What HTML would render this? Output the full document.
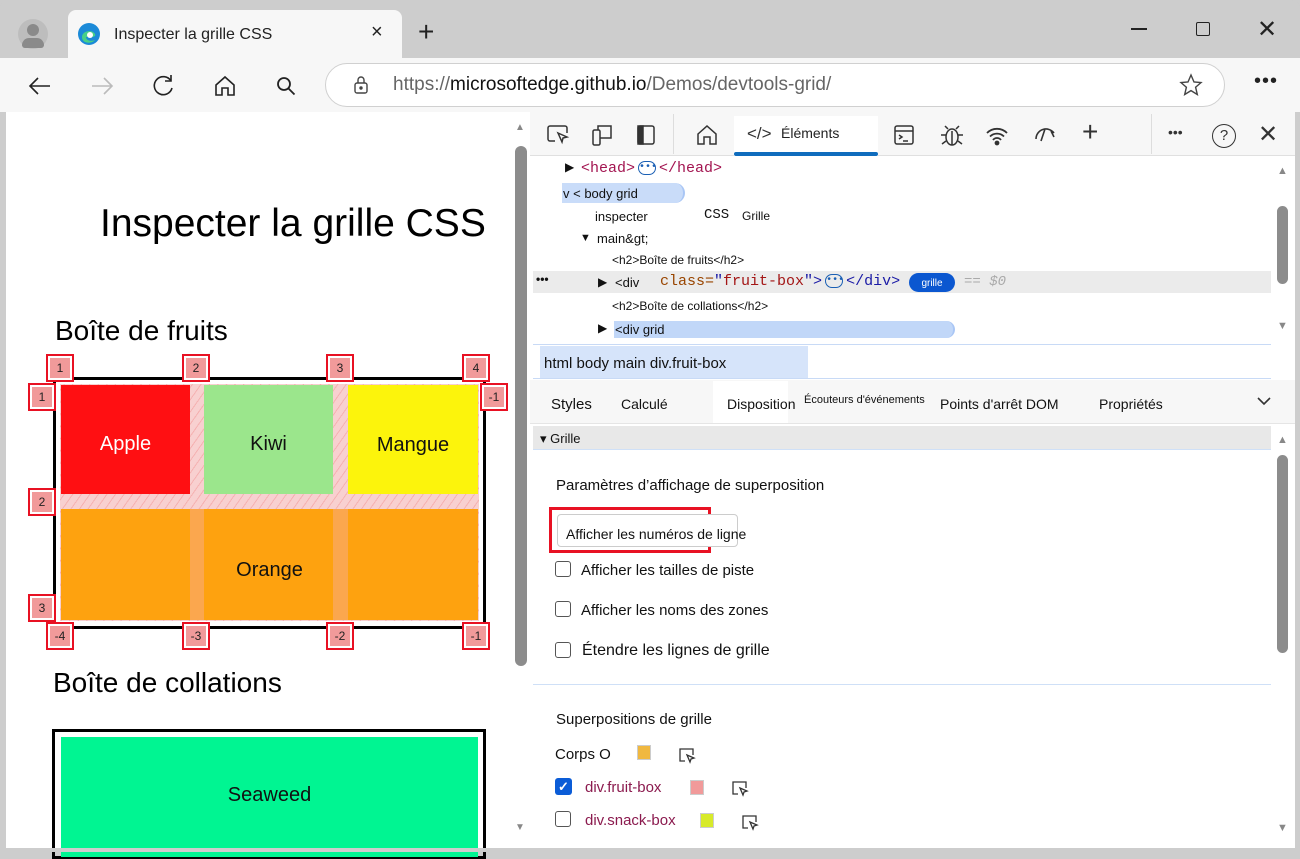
<!DOCTYPE html>
<html><head><meta charset="utf-8"><style>
*{margin:0;padding:0;box-sizing:border-box}
body{width:1300px;height:852px;overflow:hidden;background:#cdcdcd;font-family:"Liberation Sans",sans-serif;position:relative;color:#111}
.a{position:absolute}
.mono{font-family:"Liberation Mono",monospace}
.lb{position:absolute;width:28px;height:28px;border:2px solid #e81123;background:#fff;}
.lb span{position:absolute;left:2px;top:2px;width:20px;height:20px;background:#f19a9a;font-size:12px;text-align:center;line-height:20px;color:#222}
.cb{position:absolute;width:16px;height:16px;border:1.5px solid #555;border-radius:3px;background:#fff}
.t13{font-size:13px}
</style></head><body>
<!-- title bar -->
<div class="a" style="left:0;top:0;width:1300px;height:58px;background:#cdcdcd;border-radius:8px 8px 0 0"></div>
<div class="a" style="left:18px;top:19px;width:30px;height:30px;border-radius:50%;background:#bdbdbd"></div>
<div class="a" style="left:27px;top:24px;width:12px;height:12px;border-radius:50%;background:#8a8a8a"></div>
<div class="a" style="left:22px;top:38px;width:22px;height:10px;border-radius:10px 10px 4px 4px;background:#8a8a8a"></div>
<div class="a" style="left:68px;top:10px;width:334px;height:50px;background:#f7f7f7;border-radius:8px 8px 0 0"></div>
<svg class="a" style="left:77px;top:22px" width="24" height="24" viewBox="0 0 24 24"><circle cx="12" cy="12" r="11" fill="#1b8ad8"/><path d="M5 15c0-6 10-8 13-3 1 2-1 3-4 3H9c0 3 4 5 9 3-3 4-13 4-13-3z" fill="#48d088"/><circle cx="13" cy="13" r="3" fill="#fff"/></svg>
<div class="a" style="left:114px;top:26px;font-size:16px;color:#222">Inspecter la grille CSS</div>
<div class="a" style="left:371px;top:21px;font-size:20px;color:#222">×</div>
<div class="a" style="left:418px;top:16px;font-size:28px;font-weight:300;color:#222">+</div>
<div class="a" style="left:1131px;top:28px;width:16px;height:1.5px;background:#222"></div>
<div class="a" style="left:1196px;top:22px;width:14px;height:14px;border:1.5px solid #222;border-radius:2px"></div>
<div class="a" style="left:1257px;top:15px;font-size:24px;color:#222">✕</div>
<!-- toolbar -->
<div class="a" style="left:0;top:58px;width:1300px;height:54px;background:#f7f7f7"></div>
<svg class="a" style="left:26px;top:72px" width="28" height="28" viewBox="0 0 28 28" fill="none" stroke="#222" stroke-width="1.6"><path d="M24 14H4M12 6l-8 8 8 8"/></svg>
<svg class="a" style="left:88px;top:72px" width="28" height="28" viewBox="0 0 28 28" fill="none" stroke="#bbb" stroke-width="1.6"><path d="M4 14h20M16 6l8 8-8 8"/></svg>
<svg class="a" style="left:150px;top:72px" width="28" height="28" viewBox="0 0 28 28" fill="none" stroke="#222" stroke-width="1.6"><path d="M21 9a9 9 0 1 0 1 7"/><path d="M21 3v6h-6"/></svg>
<svg class="a" style="left:211px;top:72px" width="28" height="28" viewBox="0 0 28 28" fill="none" stroke="#222" stroke-width="1.6"><path d="M5 13l9-8 9 8v10h-6v-7h-6v7H5z"/></svg>
<svg class="a" style="left:272px;top:72px" width="28" height="28" viewBox="0 0 28 28" fill="none" stroke="#222" stroke-width="1.8"><circle cx="12" cy="12" r="6"/><path d="M16.5 16.5l6 6"/></svg>
<div class="a" style="left:325px;top:63px;width:900px;height:44px;border:1px solid #d0d0d0;border-radius:22px;background:#fff"></div>
<svg class="a" style="left:350px;top:74px" width="22" height="22" viewBox="0 0 22 22" fill="none" stroke="#444" stroke-width="1.4"><rect x="5" y="9" width="12" height="10" rx="2"/><path d="M8 9V6a3 3 0 0 1 6 0v3"/><circle cx="11" cy="14" r="1" fill="#444"/></svg>
<div class="a" style="left:393px;top:74px;font-size:19px;color:#666">https://<span style="color:#111">microsoftedge.github.io</span>/Demos/devtools-grid/</div>
<svg class="a" style="left:1178px;top:72px" width="26" height="26" viewBox="0 0 26 26" fill="none" stroke="#444" stroke-width="1.4"><path d="M13 3l3 7 7 .6-5.4 4.6 1.7 7.3L13 18.6 6.7 22.5l1.7-7.3L3 10.6l7-.6z"/></svg>
<div class="a" style="left:1254px;top:70px;font-size:20px;letter-spacing:1px;color:#222">•••</div>
<!-- page content -->
<div class="a" style="left:6px;top:112px;width:506px;height:736px;background:#fff;overflow:hidden"></div>
<div class="a" style="left:512px;top:112px;width:18px;height:736px;background:#fff"></div>
<div class="a" style="left:515px;top:146px;width:12px;height:520px;background:#8c8c8c;border-radius:6px"></div>
<div class="a" style="left:515px;top:122px;font-size:10px;color:#888">▲</div>
<div class="a" style="left:515px;top:822px;font-size:10px;color:#888">▼</div>
<div class="a" style="left:100px;top:202px;font-size:39px;color:#000">Inspecter la grille CSS</div>
<div class="a" style="left:55px;top:315px;font-size:28px;color:#000">Boîte de fruits</div>
<div class="a" style="left:53px;top:377px;width:433px;height:252px;border:3px solid #000"></div>
<div class="a" style="left:60px;top:384px;width:419px;height:237px;background:#f8d0d0;background-image:repeating-linear-gradient(-55deg,transparent 0 6px,rgba(240,120,120,.35) 6px 7px)"></div>
<div class="a" style="left:61px;top:385px;width:129px;height:109px;background:#ff0f12;color:#fff;font-size:20px;text-align:center;line-height:118px">Apple</div>
<div class="a" style="left:204px;top:385px;width:129px;height:109px;background:#9be68c;font-size:20px;text-align:center;line-height:118px">Kiwi</div>
<div class="a" style="left:348px;top:385px;width:130px;height:109px;background:#fcf40c;font-size:20px;text-align:center;line-height:120px">Mangue</div>
<div class="a" style="left:61px;top:509px;width:417px;height:111px;background:#fea20f;font-size:20px;text-align:center;line-height:122px">Orange</div>
<div class="a" style="left:190px;top:509px;width:14px;height:111px;background:rgba(248,170,120,.6)"></div>
<div class="a" style="left:333px;top:509px;width:15px;height:111px;background:rgba(248,170,120,.6)"></div>
<div class="lb" style="left:46px;top:354px"><span>1</span></div>
<div class="lb" style="left:182px;top:354px"><span>2</span></div>
<div class="lb" style="left:326px;top:354px"><span>3</span></div>
<div class="lb" style="left:462px;top:354px"><span>4</span></div>
<div class="lb" style="left:28px;top:383px"><span>1</span></div>
<div class="lb" style="left:28px;top:488px"><span>2</span></div>
<div class="lb" style="left:28px;top:594px"><span>3</span></div>
<div class="lb" style="left:480px;top:383px"><span>-1</span></div>
<div class="lb" style="left:46px;top:622px"><span>-4</span></div>
<div class="lb" style="left:182px;top:622px"><span>-3</span></div>
<div class="lb" style="left:326px;top:622px"><span>-2</span></div>
<div class="lb" style="left:462px;top:622px"><span>-1</span></div>
<div class="a" style="left:53px;top:667px;font-size:28px;color:#000">Boîte de collations</div>
<div class="a" style="left:52px;top:729px;width:434px;height:130px;border:3px solid #000"></div>
<div class="a" style="left:61px;top:737px;width:417px;height:120px;background:#00f592;font-size:20px;text-align:center;line-height:116px">Seaweed</div>
<div class="a" style="left:0;top:848px;width:1300px;height:4px;background:#cdcdcd"></div>
<!-- devtools -->
<div class="a" style="left:530px;top:112px;width:765px;height:736px;background:#fff"></div>
<div class="a" style="left:530px;top:112px;width:765px;height:44px;background:#f7f7f7;border-bottom:1px solid #e0e0e0"></div>
<svg class="a" style="left:545px;top:122px" width="26" height="26" viewBox="0 0 26 26" fill="none" stroke="#333" stroke-width="1.5"><path d="M10 19H5a2 2 0 0 1-2-2V6a2 2 0 0 1 2-2h15a2 2 0 0 1 2 2v5"/><path d="M13 11l9 4-4 1-1 4z"/></svg>
<svg class="a" style="left:589px;top:122px" width="26" height="26" viewBox="0 0 26 26" fill="none" stroke="#333" stroke-width="1.5"><rect x="4" y="8" width="7" height="15" rx="1.5"/><path d="M9 8V4h13v12h-11"/></svg>
<svg class="a" style="left:633px;top:122px" width="26" height="26" viewBox="0 0 26 26" fill="none" stroke="#333" stroke-width="1.5"><rect x="5" y="4" width="16" height="18" rx="2"/><rect x="5" y="4" width="5" height="18" fill="#333"/></svg>
<div class="a" style="left:673px;top:114px;width:1px;height:40px;background:#ddd"></div>
<svg class="a" style="left:693px;top:121px" width="28" height="28" viewBox="0 0 28 28" fill="none" stroke="#333" stroke-width="1.5"><path d="M5 13l9-8 9 8v10h-6v-7h-6v7H5z"/></svg>
<div class="a" style="left:734px;top:116px;width:144px;height:40px;background:#fff"></div>
<div class="a" style="left:734px;top:152px;width:144px;height:4px;background:#0f6cbd;border-radius:2px"></div>
<div class="a" style="left:747px;top:124px;font-size:17px;color:#333">&lt;/&gt;</div>
<div class="a" style="left:781px;top:125px;font-size:14px;color:#222">Éléments</div>
<svg class="a" style="left:890px;top:121px" width="28" height="28" viewBox="0 0 28 28" fill="none" stroke="#333" stroke-width="1.5"><rect x="5" y="5" width="18" height="18" rx="2"/><path d="M5 10h18M9 14l3 2-3 2M13 20h5"/></svg>
<svg class="a" style="left:938px;top:121px" width="28" height="28" viewBox="0 0 28 28" fill="none" stroke="#333" stroke-width="1.5"><ellipse cx="14" cy="16" rx="6" ry="8"/><path d="M10 8l-3-3M18 8l3-3M8 14H3M20 14h5M8 20l-4 3M20 20l4 3M14 10v14"/></svg>
<svg class="a" style="left:983px;top:121px" width="28" height="28" viewBox="0 0 28 28" fill="none" stroke="#333" stroke-width="1.8"><path d="M4 12a14 14 0 0 1 20 0M7 15.5a10 10 0 0 1 14 0M10 19a5 5 0 0 1 8 0"/><circle cx="14" cy="22" r="1.5" fill="#333"/></svg>
<svg class="a" style="left:1031px;top:121px" width="28" height="28" viewBox="0 0 28 28" fill="none" stroke="#333" stroke-width="1.6"><path d="M5 18a10 10 0 0 1 18-6M14 8l-4 12M20 10l3 6"/></svg>
<div class="a" style="left:1082px;top:116px;font-size:28px;font-weight:300;color:#333">+</div>
<div class="a" style="left:1151px;top:114px;width:1px;height:40px;background:#ddd"></div>
<div class="a" style="left:1168px;top:124px;font-size:14px;color:#333">•••</div>
<div class="a" style="left:1212px;top:124px;width:24px;height:24px;border:1.5px solid #333;border-radius:50%;font-size:15px;text-align:center;line-height:21px;color:#333">?</div>
<div class="a" style="left:1258px;top:120px;font-size:24px;color:#333">✕</div>
<!-- elements tree -->
<div class="a" style="left:1277px;top:165px;font-size:11px;color:#888">▲</div>
<div class="a" style="left:1277px;top:206px;width:11px;height:78px;background:#8c8c8c;border-radius:6px"></div>
<div class="a" style="left:1277px;top:320px;font-size:11px;color:#888">▼</div>
<div class="a" style="left:565px;top:160px;font-size:12px">▶</div>
<div class="a mono" style="left:581px;top:160px;font-size:15px;color:#a31551">&lt;head&gt;<span style="display:inline-block;width:18px;height:14px;border:1px solid #1a5fb4;border-radius:7px;font-size:10px;line-height:11px;text-align:center;color:#1a5fb4;vertical-align:middle;margin:0 3px">•••</span>&lt;/head&gt;</div>
<div class="a" style="left:562px;top:183px;width:123px;height:20px;background:#c9dcf9;border-radius:0 10px 10px 0;border-right:2px solid #a9c6f5"></div>
<div class="a t13" style="left:563px;top:186px">v &lt; body grid</div>
<div class="a t13" style="left:595px;top:209px">inspecter</div>
<div class="a mono" style="left:704px;top:207px;font-size:14px">CSS</div>
<div class="a" style="left:742px;top:209px;font-size:12px">Grille</div>
<div class="a" style="left:580px;top:232px;font-size:11px">▼</div>
<div class="a t13" style="left:597px;top:231px">main&amp;gt;</div>
<div class="a" style="left:612px;top:253px;font-size:12px">&lt;h2&gt;Boîte de fruits&lt;/h2&gt;</div>
<div class="a" style="left:533px;top:271px;width:738px;height:22px;background:#ebebeb"></div>
<div class="a" style="left:536px;top:272px;font-size:12px;font-weight:bold">•••</div>
<div class="a" style="left:598px;top:275px;font-size:12px">▶</div>
<div class="a t13" style="left:615px;top:275px">&lt;div</div>
<div class="a mono" style="left:660px;top:273px;font-size:15px;color:#994500">class=<span style="color:#1a1aa6">"</span><span style="color:#a31515">fruit-box</span><span style="color:#1a1aa6">"&gt;</span><span style="display:inline-block;width:18px;height:14px;border:1px solid #1a5fb4;border-radius:7px;font-size:10px;line-height:11px;text-align:center;color:#1a5fb4;vertical-align:middle;margin:0 3px">•••</span><span style="color:#1a1aa6">&lt;/div&gt;</span></div>
<div class="a" style="left:909px;top:273px;width:46px;height:19px;background:#0b57d0;border-radius:10px;color:#fff;font-size:10px;text-align:center;line-height:22px">grille</div>
<div class="a mono" style="left:964px;top:274px;font-size:14px;color:#aaa;font-style:italic">== $0</div>
<div class="a" style="left:612px;top:299px;font-size:12px">&lt;h2&gt;Boîte de collations&lt;/h2&gt;</div>
<div class="a" style="left:598px;top:321px;font-size:12px">▶</div>
<div class="a" style="left:614px;top:321px;width:341px;height:17px;background:#c1d7f8;border-radius:0 9px 9px 0;border-right:2px solid #a9c6f5"></div>
<div class="a t13" style="left:615px;top:322px">&lt;div grid</div>
<!-- breadcrumb -->
<div class="a" style="left:533px;top:344px;width:738px;height:1px;background:#c8daf6"></div>
<div class="a" style="left:540px;top:346px;width:268px;height:32px;background:#d6e4fa"></div>
<div class="a" style="left:544px;top:355px;font-size:15px">html body main div.fruit-box</div>
<div class="a" style="left:533px;top:378px;width:738px;height:1px;background:#c8daf6"></div>
<!-- tabs -->
<div class="a" style="left:530px;top:380px;width:765px;height:44px;background:#f7f7f7;border-bottom:1px solid #e5e5e5"></div>
<div class="a" style="left:713px;top:381px;width:75px;height:42px;background:#fff"></div>
<div class="a" style="left:551px;top:396px;font-size:15px">Styles</div>
<div class="a" style="left:621px;top:396px;font-size:14px">Calculé</div>
<div class="a" style="left:727px;top:396px;font-size:14px">Disposition</div>
<div class="a" style="left:804px;top:394px;font-size:11px">Écouteurs d'événements</div>
<div class="a" style="left:940px;top:396px;font-size:14px">Points d'arrêt DOM</div>
<div class="a" style="left:1099px;top:396px;font-size:14px">Propriétés</div>
<svg class="a" style="left:1256px;top:395px" width="16" height="12" viewBox="0 0 16 12" fill="none" stroke="#333" stroke-width="1.6"><path d="M2 3l6 6 6-6"/></svg>
<!-- layout pane -->
<div class="a" style="left:533px;top:426px;width:738px;height:24px;background:#e8e8e8;border-bottom:1px solid #cfe0f7"></div>
<div class="a" style="left:540px;top:431px;font-size:13px">▾ Grille</div>
<div class="a" style="left:1277px;top:434px;font-size:11px;color:#888">▲</div>
<div class="a" style="left:1277px;top:455px;width:11px;height:198px;background:#8c8c8c;border-radius:6px"></div>
<div class="a" style="left:1277px;top:822px;font-size:11px;color:#888">▼</div>
<div class="a" style="left:556px;top:477px;font-size:15px">Paramètres d’affichage de superposition</div>
<div class="a" style="left:549px;top:507px;width:162px;height:46px;border:3px solid #e81123"></div>
<div class="a" style="left:557px;top:514px;width:181px;height:33px;border:1px solid #ccc;border-radius:4px;background:#fff"></div>
<div class="a" style="left:566px;top:526px;font-size:14px">Afficher les numéros de ligne</div>
<div class="cb" style="left:555px;top:561px"></div>
<div class="a" style="left:581px;top:562px;font-size:15px">Afficher les tailles de piste</div>
<div class="cb" style="left:555px;top:601px"></div>
<div class="a" style="left:581px;top:602px;font-size:15px">Afficher les noms des zones</div>
<div class="cb" style="left:555px;top:642px"></div>
<div class="a" style="left:582px;top:642px;font-size:16px">Étendre les lignes de grille</div>
<div class="a" style="left:533px;top:684px;width:738px;height:1px;background:#cfe0f7"></div>
<div class="a" style="left:556px;top:711px;font-size:15px">Superpositions de grille</div>
<div class="a" style="left:555px;top:746px;font-size:15px">Corps O</div>
<div class="a" style="left:637px;top:745px;width:14px;height:15px;background:#f0b840;border:1px solid #ccc"></div>
<svg class="a" style="left:677px;top:746px" width="20" height="20" viewBox="0 0 20 20" fill="none" stroke="#333" stroke-width="1.3"><path d="M8 15H3V3h13v6"/><path d="M10 9l7 3-3 1-1 3z"/></svg>
<div class="a" style="left:555px;top:778px;width:17px;height:17px;background:#0b5cd7;border-radius:3px;color:#fff;font-size:13px;text-align:center;line-height:17px;font-weight:bold">✓</div>
<div class="a" style="left:585px;top:779px;font-size:15px;color:#8b1a4e">div.fruit-box</div>
<div class="a" style="left:690px;top:780px;width:14px;height:15px;background:#f19a9a;border:1px solid #ccc"></div>
<svg class="a" style="left:730px;top:779px" width="20" height="20" viewBox="0 0 20 20" fill="none" stroke="#333" stroke-width="1.3"><path d="M8 15H3V3h13v6"/><path d="M10 9l7 3-3 1-1 3z"/></svg>
<div class="cb" style="left:555px;top:811px"></div>
<div class="a" style="left:585px;top:812px;font-size:15px;color:#8b1a4e">div.snack-box</div>
<div class="a" style="left:700px;top:813px;width:14px;height:15px;background:#d7ea2a;border:1px solid #ccc"></div>
<svg class="a" style="left:740px;top:813px" width="20" height="20" viewBox="0 0 20 20" fill="none" stroke="#333" stroke-width="1.3"><path d="M8 15H3V3h13v6"/><path d="M10 9l7 3-3 1-1 3z"/></svg>
</body></html>
